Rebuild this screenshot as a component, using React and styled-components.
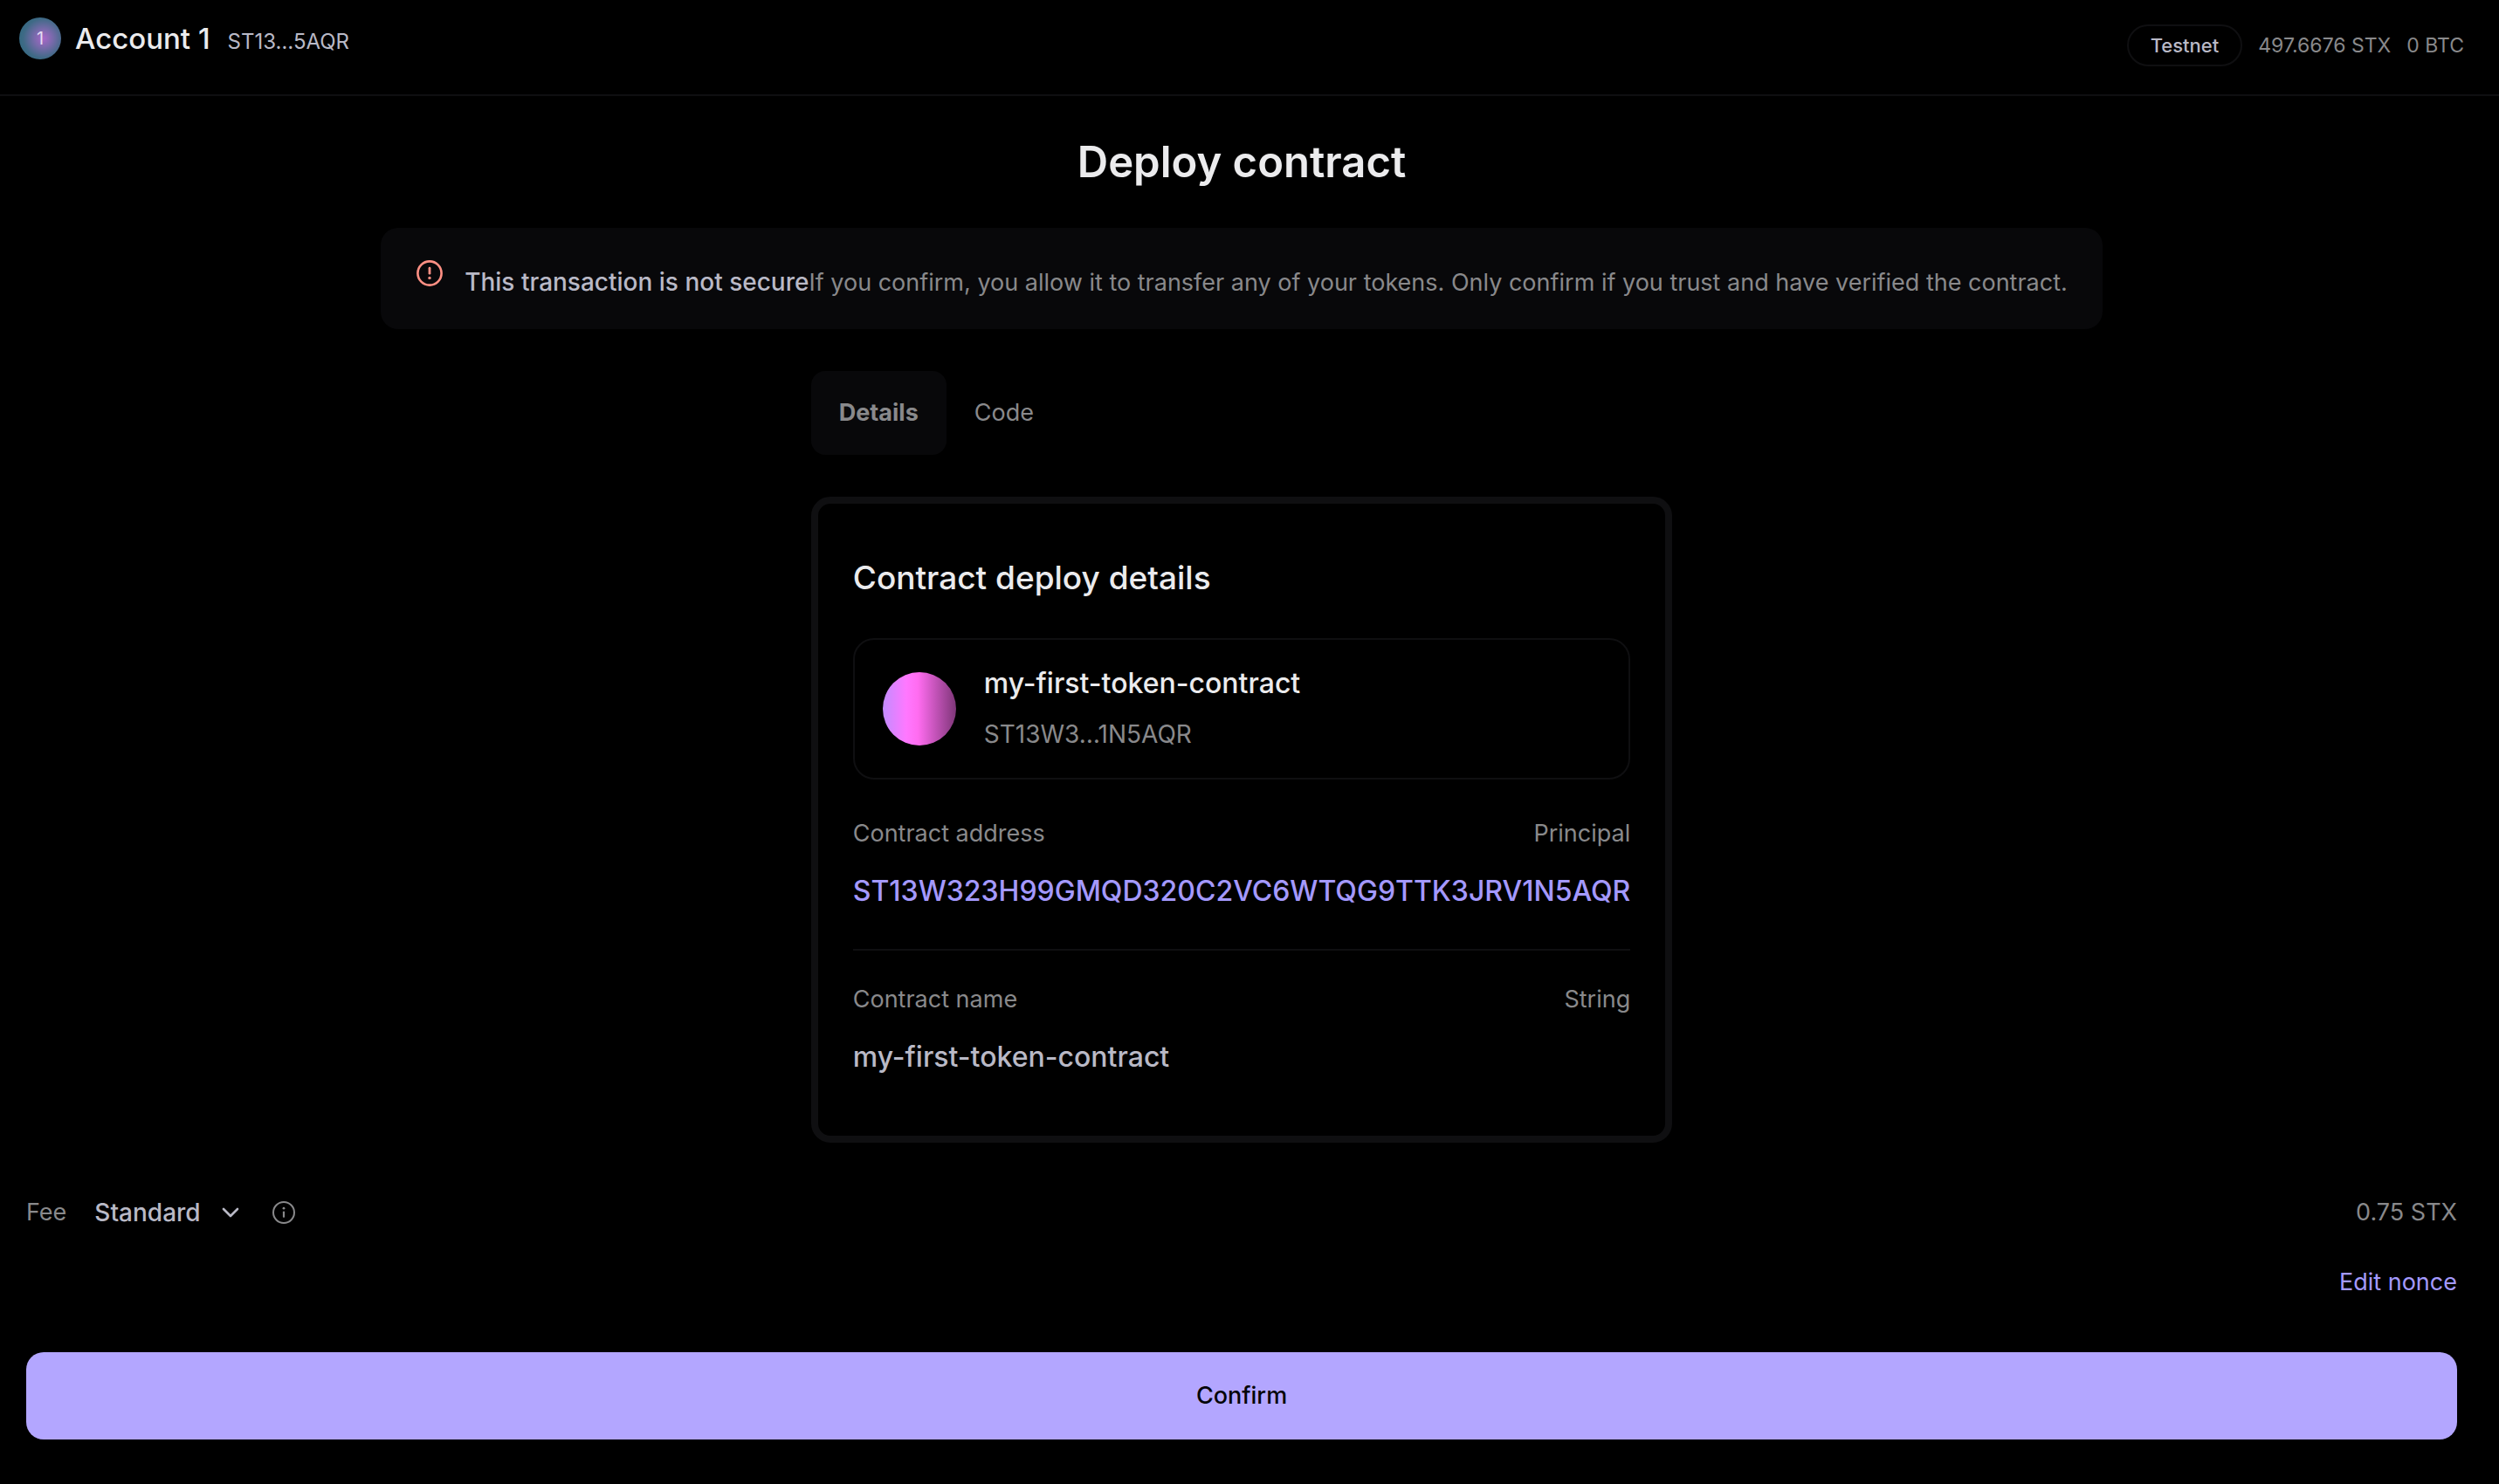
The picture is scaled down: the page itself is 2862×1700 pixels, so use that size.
import React from 'react';
import styled, { createGlobalStyle } from 'styled-components';

const color = {
  bg: '#000000',
  surface: '#08080a',
  line: '#0f0f11',
  bright: '#ebebed',
  text: '#b9b9c6',
  muted: '#89898b',
  accent: '#a499ff',
  button: '#b3a6ff',
  danger: '#ff9084',
};

const GlobalStyle = createGlobalStyle`
  *, *::before, *::after { box-sizing: border-box; }
  body {
    margin: 0;
    background: ${color.bg};
    color: ${color.muted};
    font-family: Inter, 'Liberation Sans', sans-serif;
    font-size: 27px;
    line-height: 40px;
  }
  h1, h2, h3, p, dl, dt, dd { margin: 0; }
  button, select { font: inherit; color: inherit; background: none; border: 0; padding: 0; cursor: pointer; }
  a { text-decoration: none; }
`;

const Header = styled.header`
  display: flex;
  align-items: flex-start;
  justify-content: space-between;
  height: 110px;
  padding: 20px 40px 0 22px;
  border-bottom: 2px solid ${color.line};
`;

const Account = styled.div`
  display: flex;
  align-items: flex-start;
  gap: 16px;
`;

const Avatar = styled.span`
  display: grid;
  place-items: center;
  width: 48px;
  height: 48px;
  border-radius: 50%;
  background: radial-gradient(circle at 58% 50%, #a766c8 0%, #7a6aac 28%, #3f6a86 62%, #24687a 100%);
  color: #e3dcf2;
  font-size: 20px;
`;

const AccountText = styled.div`
  display: flex;
  align-items: baseline;
  gap: 20px;
  line-height: 48px;
`;

const AccountName = styled.strong`
  color: ${color.bright};
  font-size: 33px;
  font-weight: 500;
`;

const AccountAddress = styled.span`
  color: ${color.text};
  font-size: 24px;
`;

const Balances = styled.div`
  display: flex;
  align-items: center;
  gap: 18px;
  padding-top: 8px;
  font-size: 23px;
`;

const NetworkBadge = styled.button`
  && {
    height: 48px;
    padding: 0 25px;
    border: 2px solid ${color.line};
    border-radius: 24px;
    color: ${color.text};
    font-size: 22px;
    font-weight: 500;
  }
`;

const Main = styled.main`
  display: flex;
  flex-direction: column;
  align-items: center;
  padding: 46px 48px 50px 30px;
`;

const PageTitle = styled.h1`
  color: ${color.bright};
  font-size: 49px;
  font-weight: 600;
  line-height: 60px;
`;

const Warning = styled.section`
  display: flex;
  gap: 24px;
  margin-top: 45px;
  padding: 36px 40px;
  min-height: 116px;
  border-radius: 20px;
  background: ${color.surface};
`;

const WarningText = styled.p`
  align-self: flex-end;
  line-height: 34px;
`;

const WarningLead = styled.strong`
  color: ${color.text};
  font-size: 28px;
  font-weight: 500;
`;

const Panel = styled.div`
  display: flex;
  flex-direction: column;
  gap: 48px;
  margin-top: 48px;
`;

const Tabs = styled.div`
  display: flex;
`;

const Tab = styled.button`
  && {
    height: 96px;
    padding: 0 32px;
    border-radius: 16px;
    background: ${(p) => (p.$active ? color.surface : 'transparent')};
    font-weight: ${(p) => (p.$active ? 700 : 400)};
  }
`;

const Card = styled.section`
  padding: 60px 40px 24px;
  border: 8px solid ${color.line};
  border-radius: 22px;
`;

const CardTitle = styled.h2`
  color: ${color.bright};
  font-size: 37px;
  font-weight: 500;
  line-height: 50px;
`;

const ContractBox = styled.div`
  display: flex;
  align-items: center;
  gap: 32px;
  margin: 44px 0 6px;
  padding: 30px 32px;
  border: 2px solid ${color.line};
  border-radius: 24px;
`;

const ContractOrb = styled.span`
  width: 84px;
  height: 84px;
  border-radius: 50%;
  background: linear-gradient(90deg, #c28cff 0%, #ff78ff 32%, #ff6cf0 48%, #7e3678 100%);
`;

const ContractText = styled.div`
  display: grid;
  gap: 18px;
  font-size: 28px;
`;

const ContractTitle = styled.h3`
  color: ${color.bright};
  font-size: 32px;
  font-weight: 500;
  line-height: 40px;
`;

const Row = styled.div`
  display: grid;
  grid-template-columns: 1fr auto;
  row-gap: 26px;
  padding: 36px 0 46px;

  & + & { border-top: 2px solid ${color.line}; }
`;

const RowType = styled.dd`
  text-align: right;
`;

const RowValue = styled.dd`
  grid-column: 1 / -1;
  color: ${color.text};
  font-size: 32px;
  font-weight: 500;
`;

const AccentLink = styled.a`
  color: ${color.accent};
`;

const Footer = styled.footer`
  display: flex;
  flex-direction: column;
  align-items: flex-end;
  align-self: stretch;
  margin-top: 56px;
`;

const FeeRow = styled.div`
  display: flex;
  align-items: center;
  width: 100%;
  height: 48px;
  margin-bottom: 36px;
`;

const SelectWrap = styled.span`
  display: grid;
  align-items: center;
  margin: 0 36px 0 32px;
  color: ${color.text};

  > * { grid-area: 1 / 1; }
  > svg { justify-self: end; pointer-events: none; }
`;

const FeeSelect = styled.select`
  && {
    appearance: none;
    field-sizing: content;
    padding-right: 44px;
    font-size: 28px;
    font-weight: 500;
  }
`;

const IconButton = styled.button`
  display: flex;
`;

const FeeAmount = styled.output`
  margin-left: auto;
`;

const ConfirmButton = styled.button`
  && {
    width: 100%;
    height: 100px;
    margin-top: 60px;
    border-radius: 20px;
    background: ${color.button};
    color: #050508;
    font-weight: 500;
  }
`;

const AlertIcon = () => (
  <svg width="32" height="32" viewBox="0 0 32 32" fill="none" stroke={color.danger} strokeLinecap="round" aria-hidden="true">
    <circle cx="16" cy="16" r="13.6" strokeWidth="2.6" />
    <path d="M16 10.2v6" strokeWidth="2.8" />
    <circle cx="16" cy="21.4" r="1.7" fill={color.danger} stroke="none" />
  </svg>
);

const ChevronIcon = () => (
  <svg width="20" height="14" viewBox="0 0 20 14" fill="none" stroke="currentColor" strokeWidth="2.6" strokeLinecap="round" strokeLinejoin="round" aria-hidden="true">
    <path d="M2 3l8 8 8-8" />
  </svg>
);

const InfoIcon = () => (
  <svg width="30" height="30" viewBox="0 0 30 30" fill="none" stroke={color.muted} strokeLinecap="round" aria-hidden="true">
    <circle cx="15" cy="15" r="12" strokeWidth="2" />
    <path d="M15 14.6v5.2" strokeWidth="2.2" />
    <circle cx="15" cy="10.2" r="1.4" fill={color.muted} stroke="none" />
  </svg>
);

export default function App() {
  return (
    <>
      <GlobalStyle />
      <Header>
        <Account>
          <Avatar>1</Avatar>
          <AccountText>
            <AccountName>Account 1</AccountName>
            <AccountAddress>ST13…5AQR</AccountAddress>
          </AccountText>
        </Account>
        <Balances>
          <NetworkBadge type="button">Testnet</NetworkBadge>
          <span>497.6676 STX</span>
          <span>0 BTC</span>
        </Balances>
      </Header>
      <Main>
        <PageTitle>Deploy contract</PageTitle>
        <Warning role="alert">
          <AlertIcon />
          <WarningText>
            <WarningLead>This transaction is not secure</WarningLead>
            If you confirm, you allow it to transfer any of your tokens. Only confirm if you trust and have verified the contract.
          </WarningText>
        </Warning>
        <Panel>
          <Tabs role="tablist">
            <Tab type="button" role="tab" aria-selected="true" $active>Details</Tab>
            <Tab type="button" role="tab" aria-selected="false">Code</Tab>
          </Tabs>
          <Card>
            <CardTitle>Contract deploy details</CardTitle>
            <ContractBox>
              <ContractOrb />
              <ContractText>
                <ContractTitle>my-first-token-contract</ContractTitle>
                <p>ST13W3…1N5AQR</p>
              </ContractText>
            </ContractBox>
            <dl>
              <Row>
                <dt>Contract address</dt>
                <RowType>Principal</RowType>
                <RowValue>
                  <AccentLink href="#address">ST13W323H99GMQD320C2VC6WTQG9TTK3JRV1N5AQR</AccentLink>
                </RowValue>
              </Row>
              <Row>
                <dt>Contract name</dt>
                <RowType>String</RowType>
                <RowValue>my-first-token-contract</RowValue>
              </Row>
            </dl>
          </Card>
        </Panel>
        <Footer>
          <FeeRow>
            <label htmlFor="fee">Fee</label>
            <SelectWrap>
              <FeeSelect id="fee" defaultValue="standard">
                <option value="standard">Standard</option>
              </FeeSelect>
              <ChevronIcon />
            </SelectWrap>
            <IconButton type="button" aria-label="About fees">
              <InfoIcon />
            </IconButton>
            <FeeAmount htmlFor="fee">0.75 STX</FeeAmount>
          </FeeRow>
          <AccentLink href="#nonce">Edit nonce</AccentLink>
          <ConfirmButton type="button">Confirm</ConfirmButton>
        </Footer>
      </Main>
    </>
  );
}
